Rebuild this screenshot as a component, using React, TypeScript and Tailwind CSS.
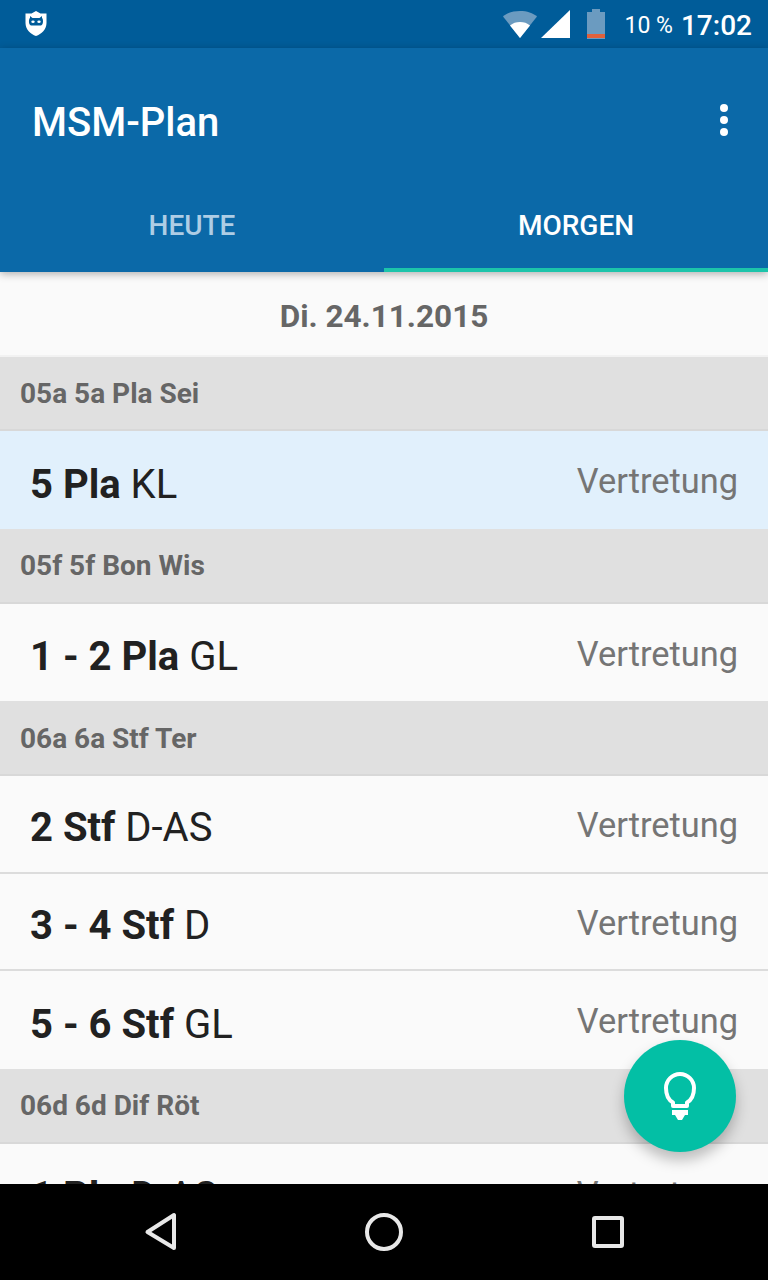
const FONT = { fontFamily: "Roboto, sans-serif" };

type Row = { lesson: string; room: string; active?: boolean };
type Group = { title: string; rows: Row[] };

const GROUPS: Group[] = [
  { title: "05a 5a Pla Sei", rows: [{ lesson: "5 Pla", room: "KL", active: true }] },
  { title: "05f 5f Bon Wis", rows: [{ lesson: "1 - 2 Pla", room: "GL" }] },
  {
    title: "06a 6a Stf Ter",
    rows: [
      { lesson: "2 Stf", room: "D-AS" },
      { lesson: "3 - 4 Stf", room: "D" },
      { lesson: "5 - 6 Stf", room: "GL" },
    ],
  },
  { title: "06d 6d Dif Röt", rows: [{ lesson: "1 Pla", room: "D-AS" }] },
];

function StatusBar() {
  return (
    <div className="flex h-12 shrink-0 items-center bg-[#005c99] text-white">
      <svg className="ml-6 h-7 w-6" viewBox="0 0 24 28">
        <path d="M12 1 16.500 3.500 22.500 3.500V13C22.500 19.500 17.500 24 12 26 6.500 24 1.500 19.500 1.500 13V3.500L7.500 3.500Z" fill="#fff" />
        <path d="M6 8V6L8.500 8H15.500L18 6V8C19.500 9 19.500 15 17 15.500H7C4.500 15 4.500 9 6 8Z" fill="#005c99" />
        <ellipse cx="9" cy="11.700" rx="1.700" ry="1.200" fill="#fff" />
        <ellipse cx="15" cy="11.700" rx="1.700" ry="1.200" fill="#fff" />
      </svg>
      <svg className="ml-auto h-7 w-[34px]" viewBox="0 0 34 28">
        <path d="M0 6.500C4 3 10 1 17 1S30 3 34 6.500L17 28Z" fill="#6b9bc0" />
        <path d="M7 15.500C10 13 13 12 17 12S24 13 27 15.500L17 28Z" fill="#fff" />
      </svg>
      <svg className="ml-[4px] h-[30px] w-[30px]" viewBox="0 0 30 30">
        <path d="M29 1V29H0Z" fill="#fff" />
      </svg>
      <svg className="ml-[16px] h-[30px] w-[18px]" viewBox="0 0 18 30">
        <path d="M5 0H13V3H18V30H0V3H5Z" fill="#6b9bc0" />
        <rect x="0" y="25" width="18" height="4" fill="#e0613c" />
      </svg>
      <span className="ml-[20px] pt-[2px] text-[23px] leading-none" style={FONT}>10 %</span>
      <span className="ml-[8px] mr-4 pt-[3px] text-[28px] font-medium leading-none" style={FONT}>17:02</span>
    </div>
  );
}

function AppBar() {
  return (
    <div className="relative z-10 shrink-0 bg-[#0b69a8] shadow-[0_2px_8px_rgba(0,0,0,0.3)]">
      <div className="flex h-[148px] items-center justify-between pl-8 pr-10">
        <span className="pt-[2px] text-[40px] font-medium leading-none text-white" style={FONT}>MSM-Plan</span>
        <div className="mb-1 flex flex-col gap-1">
          <span className="h-2 w-2 rounded-full bg-white" />
          <span className="h-2 w-2 rounded-full bg-white" />
          <span className="h-2 w-2 rounded-full bg-white" />
        </div>
      </div>
      <div className="flex h-[76px]">
        <div className="flex flex-1 items-center justify-center pb-4 text-[28px] font-medium text-[#aecde5]" style={FONT}>
          HEUTE
        </div>
        <div className="flex flex-1 items-center justify-center border-b-4 border-[#1cc4aa] pb-3 text-[28px] font-medium text-white" style={FONT}>
          MORGEN
        </div>
      </div>
    </div>
  );
}

function GroupHeader({ title }: { title: string }) {
  return (
    <div className="flex h-[74.400px] items-center border-b-2 border-[#d8d8d8] bg-[#e0e0e0] pl-5 pt-[2px] text-[28px] font-bold text-[#666666]" style={FONT}>
      {title}
    </div>
  );
}

function LessonRow({ row, last }: { row: Row; last: boolean }) {
  return (
    <div className={`flex h-[97.800px] items-center justify-between px-[30px] ${row.active ? "bg-[#e1f0fc]" : "bg-[#fafafa]"} ${last ? "" : "border-b-2 border-[#dcdcdc]"}`}>
      <span className="pt-[9px] text-[40px] text-[#212121]" style={FONT}>
        <b className="font-bold">{row.lesson}</b> {row.room}
      </span>
      <span className="pt-[4px] text-[34.400px] text-[#757575]" style={FONT}>Vertretung</span>
    </div>
  );
}

function Fab() {
  return (
    <button className="absolute left-[624px] top-[1040px] z-20 flex h-[112px] w-[112px] items-center justify-center rounded-full bg-[#03bfa5] shadow-[0_8px_14px_rgba(0,0,0,0.25)]">
      <svg className="h-12 w-12" viewBox="0 0 48 48" fill="none">
        <path d="M17 34V30.500C12.500 28 10 24 10 16A14 14 0 0 1 38 16C38 24 35.500 28 31 30.500V34Z" stroke="#fff" strokeWidth="4" strokeLinejoin="round" />
        <path d="M16 38H32V43H29L26 48H22L19 43H16Z" fill="#fff" />
      </svg>
    </button>
  );
}

function NavBar() {
  return (
    <div className="relative z-30 flex h-24 shrink-0 items-center justify-center gap-[184px] bg-black pb-[1px]">
      <svg className="h-10 w-10" viewBox="0 0 40 40" fill="none">
        <path d="M34 3V36L7.500 20Z" stroke="#e8e8e8" strokeWidth="4" strokeLinejoin="round" />
      </svg>
      <div className="mx-[1px] h-[38px] w-[38px] rounded-full border-[4px] border-[#e8e8e8]" />
      <div className="mx-1 h-8 w-8 rounded-[3px] border-[4px] border-[#e8e8e8]" />
    </div>
  );
}

export default function App() {
  return (
    <div className="relative flex h-[1280px] w-[768px] flex-col overflow-hidden bg-[#fafafa]">
      <StatusBar />
      <AppBar />
      <div className="min-h-0 flex-1 overflow-hidden">
        <div className="flex h-[85px] items-center justify-center border-b-2 border-[#f2f2f2] pt-[6px] text-[31.500px] font-bold text-[#666666]" style={FONT}>
          Di. 24.11.2015
        </div>
        {GROUPS.map((g) => (
          <div key={g.title}>
            <GroupHeader title={g.title} />
            {g.rows.map((r, i) => (
              <LessonRow key={r.lesson} row={r} last={i === g.rows.length - 1} />
            ))}
          </div>
        ))}
      </div>
      <Fab />
      <NavBar />
    </div>
  );
}
